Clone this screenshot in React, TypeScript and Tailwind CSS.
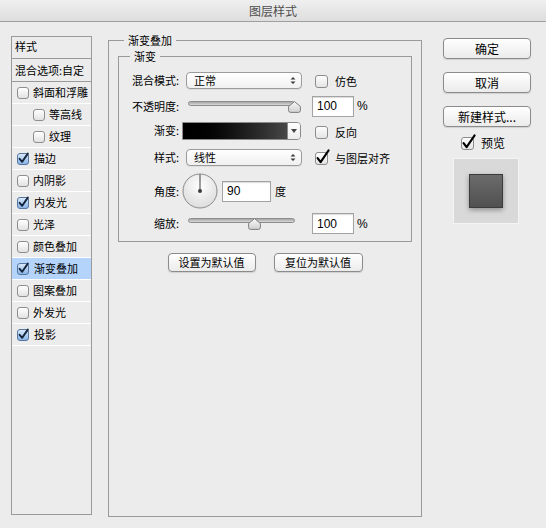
import React from "react";

const ITEMS: { label: string; checked?: boolean; nested?: boolean; active?: boolean }[] = [
  { label: "斜面和浮雕" },
  { label: "等高线", nested: true },
  { label: "纹理", nested: true },
  { label: "描边", checked: true },
  { label: "内阴影" },
  { label: "内发光", checked: true },
  { label: "光泽" },
  { label: "颜色叠加" },
  { label: "渐变叠加", checked: true, active: true },
  { label: "图案叠加" },
  { label: "外发光" },
  { label: "投影", checked: true },
];

/* Aqua-style checkbox used in the left style list */
function ListBox({ checked }: { checked?: boolean }) {
  if (!checked) {
    return (
      <span className="h-[12px] w-[12px] shrink-0 rounded-[3px] border border-[#8e8e8e] bg-linear-to-b from-white to-[#e2e2e2] shadow-[inset_0_1px_0_rgba(255,255,255,0.9)]" />
    );
  }
  return (
    <svg width="13" height="13" viewBox="0 0 13 13" className="shrink-0">
      <defs>
        <linearGradient id="blueBox" x1="0" y1="0" x2="0" y2="1">
          <stop offset="0" stopColor="#dcebfb" />
          <stop offset="1" stopColor="#86b2e6" />
        </linearGradient>
      </defs>
      <rect x="0.5" y="1.5" width="11" height="11" rx="2.5" fill="url(#blueBox)" stroke="#55779f" />
      <path d="M2.6 6.8 L5.2 9.8 L10.8 1.6" fill="none" stroke="#14233b" strokeWidth="1.9" strokeLinecap="round" strokeLinejoin="round" />
    </svg>
  );
}

/* Plain checkbox in the settings area, with a black overhanging tick when checked */
function PlainBox({ checked }: { checked?: boolean }) {
  return (
    <svg width="16" height="16" viewBox="0 0 16 16" className="shrink-0">
      <defs>
        <linearGradient id="plainBox" x1="0" y1="0" x2="0" y2="1">
          <stop offset="0" stopColor="#ffffff" />
          <stop offset="1" stopColor="#e3e3e3" />
        </linearGradient>
      </defs>
      <rect x="0.5" y="3.5" width="12" height="12" rx="2.5" fill="url(#plainBox)" stroke="#8c8c8c" />
      {checked && (
        <path d="M2.6 9.2 L5.6 13.2 L13.6 1.4" fill="none" stroke="#000" strokeWidth="2.1" strokeLinecap="round" strokeLinejoin="round" />
      )}
    </svg>
  );
}

function Select({ value }: { value: string }) {
  return (
    <div className="ml-[7px] flex h-[17px] w-[116px] items-center justify-between rounded-[4px] border border-[#9b9b9b] bg-linear-to-b from-white to-[#f0f0f0] pl-[7px] pr-[5px] shadow-[0_1px_0_rgba(0,0,0,0.06)]">
      <span className="text-[11px] leading-none">{value}</span>
      <svg width="6" height="9" viewBox="0 0 6 9">
        <path d="M0.5 3.6 L3 1 L5.5 3.6Z M0.5 5.4 L3 8 L5.5 5.4Z" fill="#3a3a3a" />
      </svg>
    </div>
  );
}

function Slider({ thumb, className }: { thumb: string; className: string }) {
  return (
    <div className={`relative h-[11px] w-[112px] ${className}`}>
      <div className="h-[5px] w-[107px] rounded-full border border-[#8d8d8d] bg-linear-to-b from-[#a6a6a6] to-[#d9d9d9]" />
      <svg width="13" height="12" viewBox="0 0 13 12" className={`absolute top-0 ${thumb}`}>
        <defs>
          <linearGradient id="thumb" x1="0" y1="0" x2="0" y2="1">
            <stop offset="0" stopColor="#fafafa" />
            <stop offset="1" stopColor="#cfcfcf" />
          </linearGradient>
        </defs>
        <path d="M6.5 0.6 L12.4 5.4 L12.4 9.4 Q12.4 11.4 10.4 11.4 L2.6 11.4 Q0.6 11.4 0.6 9.4 L0.6 5.4 Z" fill="url(#thumb)" stroke="#7e7e7e" />
      </svg>
    </div>
  );
}

function NumField({ value, className }: { value: string; className: string }) {
  return (
    <div
      className={`flex items-center border border-[#a3a3a3] bg-white pl-[4px] font-['Liberation_Sans',sans-serif] text-[12px] shadow-[inset_0_1px_1px_rgba(0,0,0,0.15)] ${className}`}
    >
      {value}
    </div>
  );
}

function Label({ text }: { text: string }) {
  return <span className="w-[60px] shrink-0 text-right text-[11px] leading-none">{text}</span>;
}

function Button({ text, className }: { text: string; className: string }) {
  return (
    <button
      className={`flex items-center justify-center rounded-[4px] border border-[#8b8b8b] bg-linear-to-b from-white to-[#ebebeb] shadow-[0_1px_1px_rgba(0,0,0,0.12)] ${className}`}
    >
      {text}
    </button>
  );
}

function StyleList() {
  return (
    <div className="ml-[11px] mt-[14px] flex h-[479px] w-[81px] flex-col border border-[#9a9a9a] text-[11px] text-black">
      <div className="h-[22px] border-b border-[#9a9a9a] pl-[3px] pt-[2px] leading-[14px]">样式</div>
      <div className="flex h-[23px] items-center border-b border-[#9a9a9a] pl-[3px]">混合选项:自定</div>
      {ITEMS.map((it) => (
        <div
          key={it.label}
          className={`flex h-[22px] items-center gap-[4px] border-b border-white ${it.nested ? "pl-[21px]" : "pl-[5px]"} ${it.active ? "bg-[#b4d4fb]" : ""}`}
        >
          <ListBox checked={it.checked} />
          <span className="leading-none">{it.label}</span>
        </div>
      ))}
    </div>
  );
}

function GradientPanel() {
  return (
    <div className="ml-[16px] mt-[18px] flex h-[477px] w-[314px] flex-col border border-[#9a9a9a] text-[11px] text-black">
      <div className="-mt-[8px] ml-[15px] w-fit bg-[#ececec] px-[4px] leading-[14px]">渐变叠加</div>

      <div className="ml-[9px] mt-[9px] flex h-[186px] w-[294px] flex-col border border-[#9a9a9a]">
        <div className="-mt-[8px] ml-[11px] w-fit bg-[#ececec] px-[4px] leading-[14px]">渐变</div>

        <div className="flex flex-col pt-[5px]">
          <div className="flex h-[24px] items-center">
            <Label text="混合模式:" />
            <Select value="正常" />
            <span className="ml-[13px] flex items-center gap-[4px]">
              <PlainBox />
              <span className="mt-[3px] leading-none">仿色</span>
            </span>
          </div>

          <div className="mt-[2px] flex h-[24px] items-center">
            <Label text="不透明度:" />
            <Slider className="ml-[9px]" thumb="left-[100px]" />
            <NumField className="ml-[12px] h-[21px] w-[42px]" value="100" />
            <span className="ml-[3px] font-['Liberation_Sans',sans-serif] text-[12px]">%</span>
          </div>

          <div className="mt-[1px] flex h-[23px] items-center">
            <Label text="渐变:" />
            <div className="ml-[3px] flex h-[18px] w-[119px] overflow-hidden rounded-r-[4px] border border-[#8a8a8a]">
              <div className="flex-1 bg-linear-to-r from-black to-[#474747]" />
              <div className="flex w-[13px] items-center justify-center border-l border-[#8a8a8a] bg-linear-to-b from-white to-[#ececec]">
                <svg width="6" height="4" viewBox="0 0 6 4">
                  <path d="M0 0 L6 0 L3 4Z" fill="#444" />
                </svg>
              </div>
            </div>
            <span className="ml-[14px] flex items-center gap-[4px]">
              <PlainBox />
              <span className="mt-[3px] leading-none">反向</span>
            </span>
          </div>

          <div className="mt-[3px] flex h-[24px] items-center">
            <Label text="样式:" />
            <Select value="线性" />
            <span className="ml-[13px] flex items-center gap-[4px]">
              <PlainBox checked />
              <span className="mt-[3px] leading-none">与图层对齐</span>
            </span>
          </div>

          <div className="mt-[3px] flex h-[38px] items-center">
            <Label text="角度:" />
            <svg width="36" height="36" viewBox="0 0 36 36" className="ml-[3px]">
              <defs>
                <radialGradient id="dial" cx="0.5" cy="0.35" r="0.65">
                  <stop offset="0" stopColor="#ffffff" />
                  <stop offset="1" stopColor="#dcdcdc" />
                </radialGradient>
              </defs>
              <circle cx="18" cy="18" r="17" fill="url(#dial)" stroke="#8a8a8a" />
              <line x1="18" y1="18" x2="18" y2="1.5" stroke="#3c3c3c" strokeWidth="1" />
              <circle cx="18" cy="18" r="2" fill="#3c3c3c" />
            </svg>
            <NumField className="ml-[4px] h-[21px] w-[49px]" value="90" />
            <span className="ml-[4px] leading-none">度</span>
          </div>

          <div className="mt-[2px] flex h-[23px] items-center">
            <Label text="缩放:" />
            <Slider className="ml-[9px]" thumb="left-[60px]" />
            <NumField className="ml-[12px] h-[21px] w-[42px]" value="100" />
            <span className="ml-[3px] font-['Liberation_Sans',sans-serif] text-[12px]">%</span>
          </div>
        </div>
      </div>

      <div className="mt-[11px] flex justify-center gap-[18px]">
        <Button className="h-[19px] w-[88px] text-[11px]" text="设置为默认值" />
        <Button className="h-[19px] w-[89px] text-[11px]" text="复位为默认值" />
      </div>
    </div>
  );
}

function ActionColumn() {
  return (
    <div className="ml-[21px] mt-[16px] flex flex-col text-[12px] text-black">
      <div className="flex flex-col gap-[13px]">
        <Button className="h-[21px] w-[88px]" text="确定" />
        <Button className="h-[21px] w-[88px]" text="取消" />
        <Button className="h-[21px] w-[88px]" text="新建样式..." />
      </div>
      <div className="mt-[6px] flex h-[17px] items-center gap-[4px] pl-[18px]">
        <PlainBox checked />
        <span className="mt-[2px] leading-none">预览</span>
      </div>
      <div className="ml-[10px] mt-[8px] flex h-[66px] w-[66px] items-center justify-center border border-[#f4f4f4] bg-[#d9d9d9]">
        <div className="h-[34px] w-[34px] border border-[#3c3c3c] bg-linear-to-b from-[#6c6c6c] to-[#505050] shadow-[0_2px_5px_rgba(0,0,0,0.35)]" />
      </div>
    </div>
  );
}

export default function App() {
  return (
    <div className="flex h-[528px] w-[546px] flex-col bg-[#ececec] font-['Noto_Sans_CJK_SC',sans-serif]">
      <div className="flex h-[22px] shrink-0 items-center justify-center border-b border-[#a0a0a0] bg-linear-to-b from-[#efefef] to-[#dedede] text-[12px] text-[#4d4d4d]">
        图层样式
      </div>
      <div className="flex items-start">
        <StyleList />
        <GradientPanel />
        <ActionColumn />
      </div>
    </div>
  );
}
